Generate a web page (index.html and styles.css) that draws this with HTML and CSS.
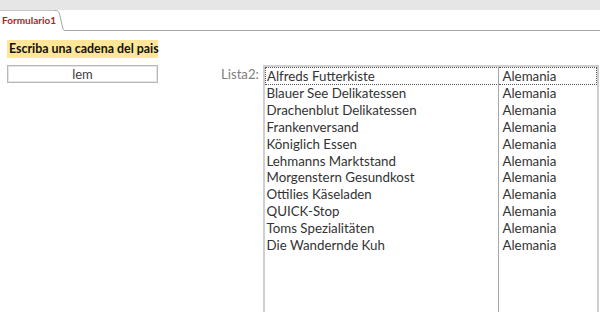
FILE: index.html
```html
<!DOCTYPE html>
<html lang="es">
<head>
	<meta charset="UTF-8">
	<title>Formulario1</title>
	<link rel="stylesheet" href="styles.css">
</head>
<body>
	<div class="topbar"></div>
	<div class="tabs">
		<div class="tab">Formulario1</div>
		<svg class="tab-curve" width="10" height="21" viewBox="0 0 10 21">
			<path d="M0 0.5 C4 0.5 4 2 5 6 L7.5 17 C8.2 20 8.6 20.5 10 20.5" fill="none" stroke="#a6a6a6" stroke-width="1"/>
		</svg>
		<div class="tab-rest"></div>
	</div>
	<div class="form">
		<div class="filter">
			<div class="caption">Escriba una cadena del pais</div>
			<div class="textbox">lem</div>
		</div>
		<div class="list-area">
			<div class="list-label">Lista2:</div>
			<div class="listbox">
				<table class="rows">
					<tr class="focus"><td>Alfreds Futterkiste</td><td>Alemania</td></tr>
					<tr><td>Blauer See Delikatessen</td><td>Alemania</td></tr>
					<tr><td>Drachenblut Delikatessen</td><td>Alemania</td></tr>
					<tr><td>Frankenversand</td><td>Alemania</td></tr>
					<tr><td>Königlich Essen</td><td>Alemania</td></tr>
					<tr><td>Lehmanns Marktstand</td><td>Alemania</td></tr>
					<tr><td>Morgenstern Gesundkost</td><td>Alemania</td></tr>
					<tr><td>Ottilies Käseladen</td><td>Alemania</td></tr>
					<tr><td>QUICK-Stop</td><td>Alemania</td></tr>
					<tr><td>Toms Spezialitäten</td><td>Alemania</td></tr>
					<tr><td>Die Wandernde Kuh</td><td>Alemania</td></tr>
				</table>
				<div class="divider"></div>
			</div>
		</div>
	</div>
</body>
</html>
```
FILE: styles.css
```css
*{margin: 0;padding: 0;box-sizing: border-box;}
body{font-family: Lato, "Open Sans", sans-serif;background: #fff;overflow: hidden;height: 313px;}
.topbar{height: 10px;background: #e6e6e6;}
.tabs{display: flex;height: 21px;}
.tab{width: 55px;padding-left: 2px;border-top: 1px solid #c6c6c6;color: #a4262c;font-size: 10px;font-weight: bold;line-height: 19px;white-space: nowrap;}
.tab-curve{display: block;flex: none;}
.tab-rest{flex: 1;border-bottom: 1px solid #a6a6a6;}
.form{display: flex;padding: 9px 0 0 7px;}
.filter{width: 151px;}
.caption{height: 18px;background: #ffe699;color: #111;font-size: 12.4px;font-weight: bold;line-height: 18px;padding-left: 2px;white-space: nowrap;}
.textbox{margin-top: 7px;height: 18px;border: 1px solid #b8b8b8;box-shadow: inset 0 0 0 1px #e4e4e4;text-align: center;color: #404040;font-size: 13px;line-height: 16px;}
.list-area{display: flex;align-items: flex-start;margin-left: 63px;margin-top: 25px;}
.list-label{width: 42px;color: #7f7f7f;font-size: 13.2px;line-height: 17px;padding-top: 1px;}
.listbox{position: relative;width: 336px;height: 247px;border: 2px solid #cfcfcf;border-bottom: none;}
.rows{border-collapse: collapse;table-layout: fixed;width: 100%;font-size: 13.3px;color: #333;}
.rows td{height: 16.9px;line-height: 16px;padding: 0 0 0 1px;white-space: nowrap;overflow: hidden;}
.rows td:first-child{width: 233px;}
.rows td:last-child{padding-left: 4px;}
.rows tr.focus td{border-top: 1px dotted #555;border-bottom: 1px dotted #555;}
.rows tr.focus td:first-child{border-left: 1px dotted #555;}
.rows tr.focus td:last-child{border-right: 1px dotted #555;}
.divider{position: absolute;top: 0;bottom: 0;left: 233px;width: 1px;background: #a6a6a6;}
```
